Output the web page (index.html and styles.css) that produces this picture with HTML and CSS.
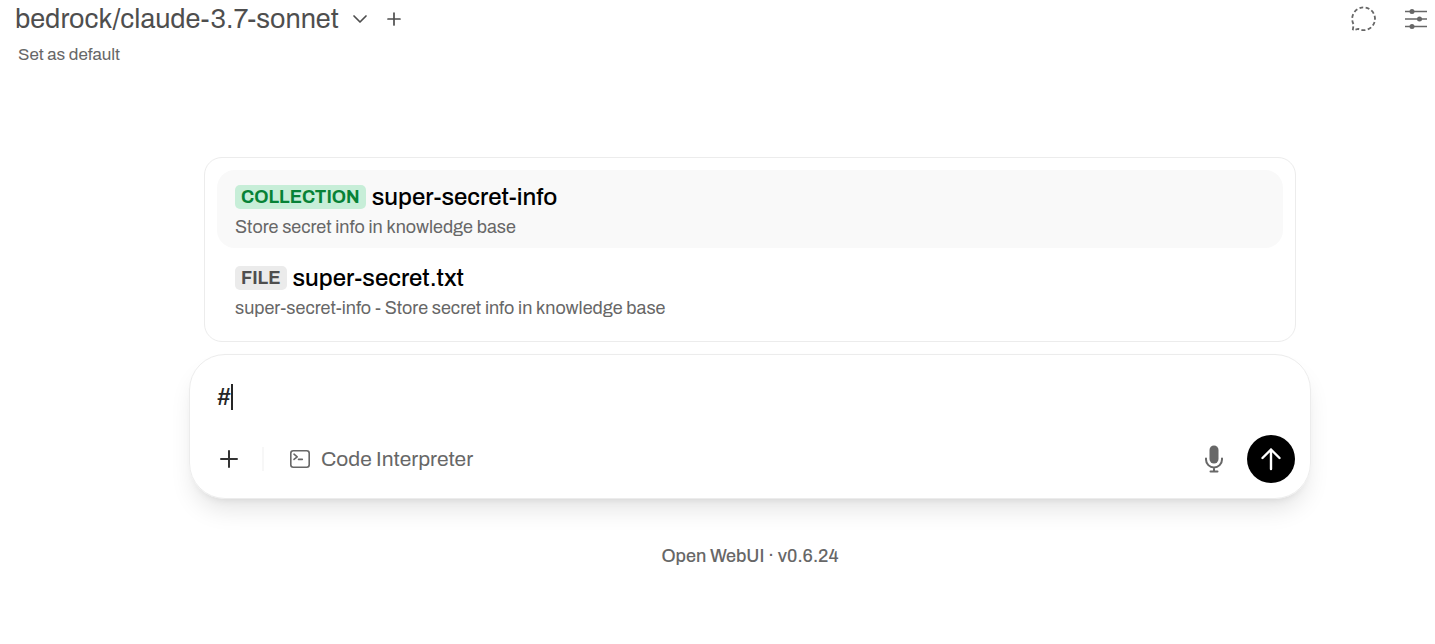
FILE: index.html
```html
<!DOCTYPE html>
<html lang="en">
<head>
<meta charset="utf-8">
<meta name="viewport" content="width=device-width, initial-scale=1">
<title>Open WebUI</title>
<link rel="stylesheet" href="styles.css">
</head>
<body>
<header class="topbar">
  <div class="model">
    <div class="model-row">
      <button class="model-name" type="button">bedrock/claude-3.7-sonnet
        <svg class="chevron" viewBox="0 0 16 16" aria-hidden="true"><path d="M2 5l6 6 6-6"/></svg>
      </button>
      <button class="icon-button" type="button" aria-label="Add model">
        <svg class="add" viewBox="0 0 14 14" aria-hidden="true"><path d="M7 1v12M1 7h12"/></svg>
      </button>
    </div>
    <button class="set-default" type="button">Set as default</button>
  </div>
  <div class="tools">
    <button class="icon-button" type="button" aria-label="Temporary chat">
      <svg class="tool" viewBox="0 0 26 26" aria-hidden="true"><path stroke-dasharray="3.9 2.4" d="M1.8 24.2l.8-5.9A11.4 11.4 0 1 1 7.3 22.9L1.8 24.2"/></svg>
    </button>
    <button class="icon-button" type="button" aria-label="Controls">
      <svg class="tool" viewBox="0 0 26 26" aria-hidden="true"><path class="rails" d="M2 5.500h22M2 13h22M2 20.500h22"/><g class="knobs"><circle cx="9" cy="5.500" r="2.500"/><circle cx="16.500" cy="13" r="2.500"/><circle cx="9" cy="20.500" r="2.500"/></g></svg>
    </button>
  </div>
</header>
<main class="chat">
  <div class="suggestions">
    <button class="suggestion selected" type="button">
      <span class="item-title"><span class="badge collection">COLLECTION</span><span>super-secret-info</span></span>
      <span class="item-note">Store secret info in knowledge base</span>
    </button>
    <button class="suggestion" type="button">
      <span class="item-title"><span class="badge file">FILE</span><span>super-secret.txt</span></span>
      <span class="item-note">super-secret-info - Store secret info in knowledge base</span>
    </button>
  </div>
  <form class="composer">
    <div class="prompt">
      <textarea class="prompt-input" rows="1" aria-label="Message">#</textarea>
      <span class="caret"></span>
    </div>
    <div class="actions">
      <button class="icon-button more" type="button" aria-label="More">
        <svg class="plus" viewBox="0 0 24 24" aria-hidden="true"><path d="M12 4v16M4 12h16"/></svg>
      </button>
      <span class="divider"></span>
      <button class="interpreter" type="button">
        <svg class="terminal" viewBox="0 0 22 20" aria-hidden="true"><rect x="1.800" y="1.800" width="18.400" height="16.400" rx="2.500"/><path d="M5 5.200l3.200 2.600L5 10.400M9.500 10.400h3.800"/></svg>
        Code Interpreter
      </button>
      <button class="icon-button mic" type="button" aria-label="Dictate">
        <svg viewBox="0 0 20 28" aria-hidden="true"><rect x="5.500" y=".5" width="9" height="18" rx="4.500"/><path d="M2 13.500v1a8 8 0 0 0 16 0v-1M10 22.500v4M6.500 26.500h7"/></svg>
      </button>
      <button class="send" type="submit" aria-label="Send">
        <svg viewBox="0 0 24 24" aria-hidden="true"><path d="M12 22V2.500M3.500 11L12 2.500 20.500 11"/></svg>
      </button>
    </div>
  </form>
  <footer class="version">Open WebUI · v0.6.24</footer>
</main>
</body>
</html>
```
FILE: styles.css
```css
* { box-sizing: border-box; }
body {
  margin: 0;
  background: #fff;
  color: #676767;
  font-family: Archivo, "Liberation Sans", Arial, sans-serif;
}
button, textarea { margin: 0; padding: 0; border: 0; background: none; color: inherit; font: inherit; }
button { cursor: pointer; }
svg { display: block; flex: none; fill: none; stroke: currentColor; stroke-linecap: round; stroke-linejoin: round; }

.topbar { display: flex; justify-content: space-between; align-items: flex-start; padding: 3px 6px 0 15px; }
.model-row { display: flex; align-items: center; gap: 19px; color: #4e4e4e; }
.model-name { display: flex; align-items: center; gap: 13px; font-size: 27px; line-height: 32px; }
.chevron { width: 16px; height: 16px; stroke-width: 1.7; }
.add { width: 14px; height: 14px; stroke-width: 1.7; }
.set-default { display: block; margin: 8px 0 0 3px; font-size: 17px; line-height: 24px; }
.tools { display: flex; gap: 26px; padding-top: 3px; }
.tool { width: 26px; height: 26px; stroke-width: 1.8; stroke-linecap: butt; }
.rails { stroke-width: 1.5; }
.knobs { fill: currentColor; stroke: none; }

.chat { display: flex; flex-direction: column; align-items: center; padding: 90px 0 0 65px; }
.suggestions { width: calc(100% - 32px); max-width: 1092px; padding: 12px; border: 1px solid #ececec; border-radius: 18px; }
.suggestion { display: block; width: 100%; padding: 10px 18px 8px; border-radius: 18px; text-align: left; }
.suggestion + .suggestion { margin-top: 3px; }
.selected { background: #f9f9f9; }
.item-title { display: flex; align-items: center; gap: 6px; color: #000; font-size: 24px; font-weight: 500; line-height: 34px; }
.badge { padding: 0 6px; border-radius: 5px; font-size: 18px; font-weight: 700; line-height: 24px; }
.collection { background: #c7eed8; color: #078236; }
.file { background: #ebebeb; color: #4e4e4e; }
.item-note { display: block; font-size: 18px; line-height: 26px; }

.composer {
  width: 100%;
  max-width: 1122px;
  margin-top: 12px;
  padding: 24px 15px 15px 27px;
  border: 1px solid #ececec;
  border-radius: 36px;
  box-shadow: 0 15px 23px -4px rgb(0 0 0 / 10%), 0 6px 9px -6px rgb(0 0 0 / 10%);
}
.prompt { display: flex; align-items: center; height: 36px; color: #262626; }
.prompt-input { field-sizing: content; resize: none; outline: none; overflow: hidden; font-size: 24px; line-height: 36px; }
.caret { width: 2px; height: 26px; background: #262626; }
.actions { display: flex; align-items: center; margin-top: 20px; }
.plus { width: 24px; height: 24px; color: #333; stroke-width: 2; }
.divider { width: 2px; height: 24px; margin: 0 25px 0 21px; background: #f7f7f7; }
.interpreter { display: flex; align-items: center; gap: 10px; font-size: 21px; line-height: 28px; }
.terminal { width: 22px; height: 20px; stroke-width: 1.6; }
.mic { margin-left: auto; }
.mic svg { width: 20px; height: 28px; stroke-width: 2; }
.mic rect { fill: currentColor; stroke: none; }
.send { display: grid; place-items: center; width: 48px; height: 48px; margin-left: 23px; border-radius: 50%; background: #000; color: #fff; }
.send svg { width: 24px; height: 24px; stroke-width: 2.4; }
.version { margin-top: 45px; font-size: 18px; font-weight: 500; line-height: 24px; }
```
